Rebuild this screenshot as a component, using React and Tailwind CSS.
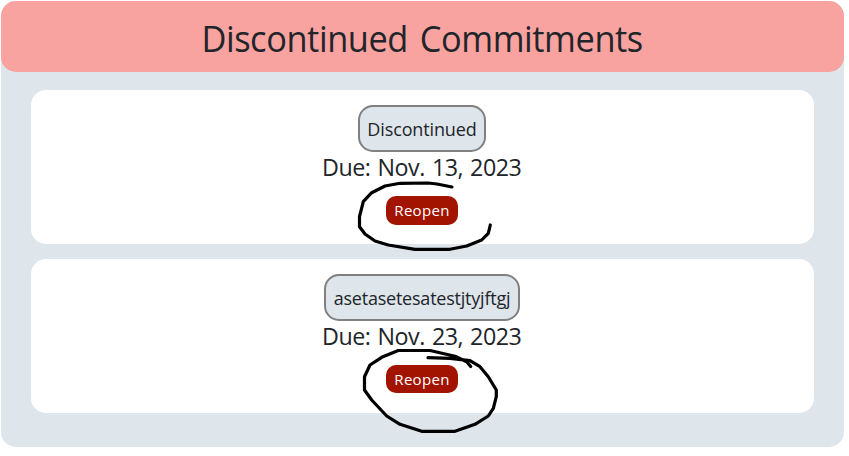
const commitments = [
  {
    name: "Discontinued",
    due: "Nov. 13, 2023",
    badgeClass: "w-[128px]",
    nameClass: "tracking-[-0.13px]",
    buttonClass: "h-[29px]",
  },
  {
    name: "asetasetesatestjtyjftgj",
    due: "Nov. 23, 2023",
    badgeClass: "w-[196px]",
    nameClass: "tracking-[-0.22px]",
    buttonClass: "h-[28px] pt-px",
  },
];

function Card({ name, due, badgeClass, nameClass, buttonClass }) {
  return (
    <article className="flex h-[154px] flex-col items-center rounded-[15px] bg-white pt-[15px] pr-px">
      <div className={`flex h-[47px] items-center justify-center whitespace-nowrap rounded-[15px] border-2 border-[#808080] bg-[#dee5eb] text-[18px] leading-none ${badgeClass}`}>
        <span className={nameClass}>{name}</span>
      </div>
      <p className="h-[31px] scale-x-[0.97] whitespace-nowrap text-[24px] leading-[30px] tracking-[-0.5px] [word-spacing:1.5px]">
        Due: {due}
      </p>
      <button className={`mt-[13px] flex w-[72px] items-center justify-center rounded-[10px] bg-[#a31400] text-[15px] leading-none tracking-[0.3px] text-white ${buttonClass}`}>
        Reopen
      </button>
    </article>
  );
}

export default function App() {
  return (
    <main className="relative h-[456px] w-[849px] overflow-hidden bg-white pl-px pt-px font-['Open_Sans','Noto_Sans',sans-serif] text-[#212529]">
      <section className="h-[446px] w-[843px] rounded-[15px] bg-[#dee5eb]">
        <header className="flex h-[71px] items-center justify-center rounded-[15px] bg-[#f9a3a1]">
          <h1 className="scale-x-[0.955] whitespace-nowrap pt-[5px] text-[36px] leading-none tracking-[-0.45px] [word-spacing:3.5px]">
            Discontinued Commitments
          </h1>
        </header>
        <div className="flex flex-col gap-[15px] px-[30px] pt-[18px]">
          {commitments.map((c) => (
            <Card key={c.name} {...c} />
          ))}
        </div>
      </section>
      {/* Freehand marker strokes over both buttons */}
      <svg className="pointer-events-none absolute left-0 top-0" width="849" height="456" fill="none" stroke="#000" strokeWidth="3.2" strokeLinecap="round" strokeLinejoin="round">
        <path d="M452 187L437 184L428 183L400 183.300L385 186L371.700 192.700L363.300 201.700L359.500 216.700V226.700L365 234L375 241L388.300 245L415 249.300H450L466.700 246L481.700 240L488.300 233.300L490.300 225" />
        <path d="M428 357.700L450 358.300L470 360.700L480 366.700L488.300 376.700L496.300 390V396.700L493.300 408.300L488.300 416L475 424.300L455 431.300H421.700L400 424.300L386.700 416L371.700 400L364.500 390V376.700L370 365L381.700 357.300L398.300 350.500H430L455 356.300L466.700 361.700L470.700 366.500" />
      </svg>
    </main>
  );
}
